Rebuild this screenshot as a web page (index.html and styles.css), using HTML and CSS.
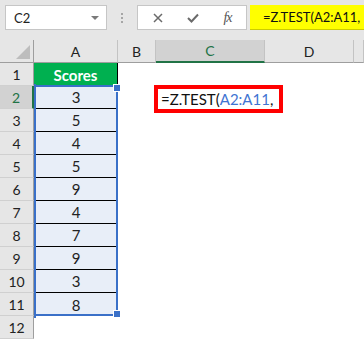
FILE: index.html
```html
<!DOCTYPE html>
<html>
<head>
<title>Z.TEST - Excel</title>
<link rel="stylesheet" href="styles.css">
</head>
<body>
<div class="bar">
  <div class="namebox"><span>C2</span><i class="drop"></i></div>
  <div class="grip"><b></b><b></b><b></b></div>
  <div class="fbtns">
    <span class="fbtn"><svg width="10" height="10" viewBox="0 0 10 10"><path d="M1 1L9 9M9 1L1 9" stroke="#6a6a6a" stroke-width="1.5" fill="none"/></svg></span>
    <span class="fbtn"><svg width="12" height="10" viewBox="0 0 12 10"><path d="M1 5L4.5 8.5L11 1.5" stroke="#6a6a6a" stroke-width="2" fill="none"/></svg></span>
    <span class="fbtn fx">fx</span>
  </div>
  <div class="formula">=Z.TEST(A2:A11,</div>
</div>

<div class="sheet">
  <div class="hd corner"><i></i></div>
  <div class="hd">A</div><div class="hd">B</div><div class="hd sel">C</div><div class="hd">D</div><div class="hd"></div>

  <div class="rh">1</div><div class="c title">Scores</div><div class="c"></div><div class="c"></div><div class="c"></div><div class="c"></div>
  <div class="rh sel">2</div>
  <div class="c a first"><div class="selbox"><i class="tl"></i><i class="bl"></i></div>3</div>
  <div class="c"></div>
  <div class="c start"><div class="callout">=Z.TEST(<span class="ref">A2:A11</span>,</div></div>
  <div class="c"></div><div class="c"></div>
  <div class="rh">3</div><div class="c a">5</div><div class="c"></div><div class="c"></div><div class="c"></div><div class="c"></div>
  <div class="rh">4</div><div class="c a">4</div><div class="c"></div><div class="c"></div><div class="c"></div><div class="c"></div>
  <div class="rh">5</div><div class="c a">5</div><div class="c"></div><div class="c"></div><div class="c"></div><div class="c"></div>
  <div class="rh">6</div><div class="c a">9</div><div class="c"></div><div class="c"></div><div class="c"></div><div class="c"></div>
  <div class="rh">7</div><div class="c a">4</div><div class="c"></div><div class="c"></div><div class="c"></div><div class="c"></div>
  <div class="rh">8</div><div class="c a">7</div><div class="c"></div><div class="c"></div><div class="c"></div><div class="c"></div>
  <div class="rh">9</div><div class="c a">9</div><div class="c"></div><div class="c"></div><div class="c"></div><div class="c"></div>
  <div class="rh">10</div><div class="c a">3</div><div class="c"></div><div class="c"></div><div class="c"></div><div class="c"></div>
  <div class="rh">11</div><div class="c a last">8</div><div class="c"></div><div class="c"></div><div class="c"></div><div class="c"></div>
  <div class="rh">12</div><div class="c"></div><div class="c"></div><div class="c"></div><div class="c"></div><div class="c"></div>
</div>
</body>
</html>
```

FILE: styles.css
```css
* {box-sizing: border-box;}
body {margin: 0;font-family: Lato, "Liberation Sans", sans-serif;color: #222;background: #fff;overflow: hidden;}

/* formula bar */
.bar {display: flex;height: 40px;padding: 5px 0 0 5px;background: #e6e6e6;}
.namebox {display: flex;align-items: center;justify-content: space-between;width: 102px;height: 25px;padding: 0 7px 0 8px;background: #fff;border: 1px solid #c6c6c6;font-size: 13px;}
.drop {width: 0;height: 0;border-left: 4px solid transparent;border-right: 4px solid transparent;border-top: 4px solid #7a7a7a;}
.grip {display: flex;flex-direction: column;align-items: center;justify-content: center;gap: 2px;width: 30px;height: 25px;}
.grip b {width: 2px;height: 2px;background: #a6a6a6;}
.fbtns {display: flex;width: 110px;height: 25px;padding-left: 2px;background: #fff;border: 1px solid #c6c6c6;}
.fbtn {display: flex;align-items: center;justify-content: center;width: 35px;}
.fx {font-family: "Liberation Serif", serif;font-style: italic;font-size: 14px;color: #555;letter-spacing: -1px;}
.formula {flex: 1;height: 25px;margin-left: 3px;padding-left: 13px;line-height: 25px;background: #ffff00;border-bottom: 1px solid #cccc00;font-size: 13px;color: #111;white-space: nowrap;}

/* grid */
.sheet {display: grid;grid-template-columns: 34px 84px 38px 109px 89px 1fr;grid-template-rows: repeat(13, 23px);}
.hd {display: flex;align-items: center;justify-content: center;background: #e6e6e6;border-right: 1px solid #c3c3c3;border-bottom: 1px solid #9e9e9e;font-size: 14px;}
.hd.sel {background: #d2d2d2;color: #217346;border-bottom: 2px solid #217346;}
.corner {position: relative;border-right-color: #9e9e9e;}
.corner i {position: absolute;right: 3px;bottom: 3px;width: 14px;height: 14px;background: #bdbdbd;clip-path: polygon(100% 0, 100% 100%, 0 100%);}
.rh {display: flex;align-items: center;justify-content: center;background: #e6e6e6;border-right: 1px solid #9e9e9e;border-bottom: 1px solid #d0d0d0;font-size: 14px;}
.rh.sel {background: #d2d2d2;color: #217346;border-right: 2px solid #217346;}
.c {display: flex;align-items: center;justify-content: center;background: #fff;font-size: 15px;}
.c.start {justify-content: flex-start;}
.title {background: #00b050;color: #fff;font-weight: bold;border-right: 1px solid #000;}
.a {background: #e8eef8;border-bottom: 1px solid #000;}
.a.last {border-bottom: none;}

/* selection of A2:A11 */
.a.first {position: relative;}
.selbox {position: absolute;top: -1px;left: 0;width: 84px;height: 231px;border: 2px solid #3a70c8;z-index: 1;}
.selbox::before, .selbox::after {content: "";position: absolute;right: -5px;width: 6px;height: 6px;background: #3a70c8;border: 1px solid #fff;}
.selbox::before {top: -3px;}
.selbox::after {bottom: -4px;}
.selbox .tl, .selbox .bl {position: absolute;left: -2px;width: 2px;height: 4px;background: #3a70c8;}
.selbox .tl {top: -3px;}
.selbox .bl {bottom: -4px;}

/* annotation */
.callout {position: relative;z-index: 2;align-self: flex-start;margin: -1px 0 0 -2px;width: 129px;min-width: 129px;height: 28px;padding-left: 3px;border: 4px solid #ff0000;background: #fff;font-size: 15px;line-height: 20px;color: #111;white-space: nowrap;}
.ref {color: #3f74d2;}
```
